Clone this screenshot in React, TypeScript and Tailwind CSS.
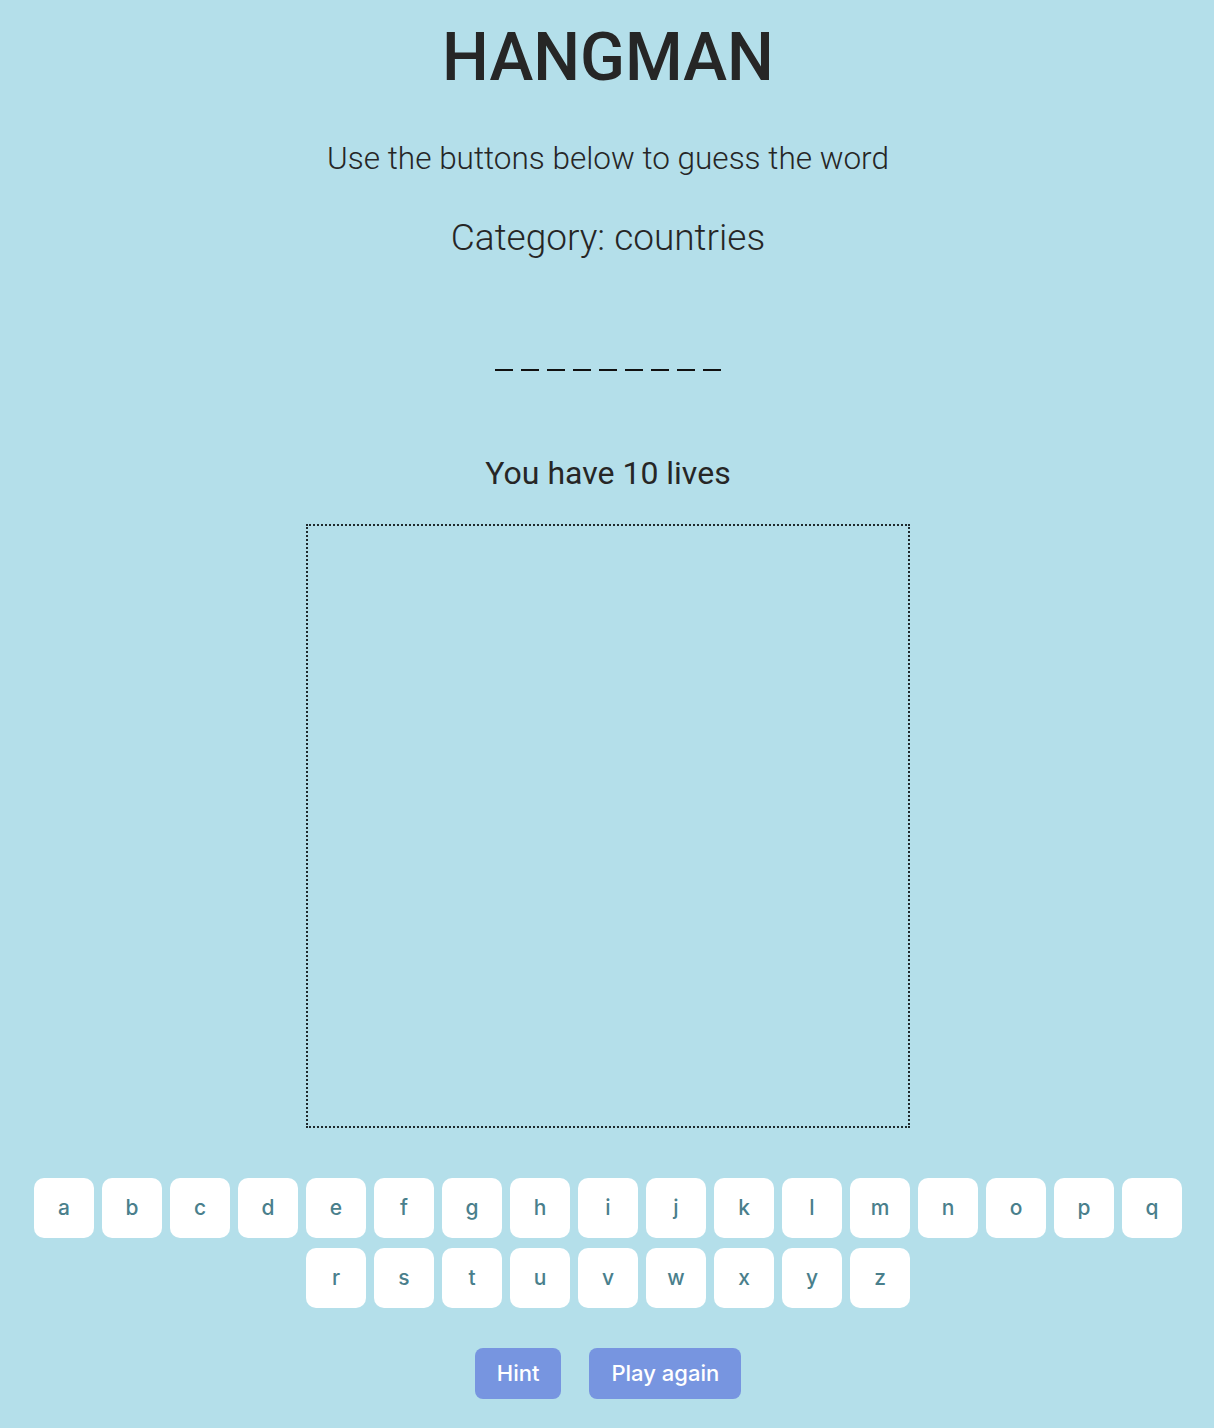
import React from 'react';

const LETTERS = 'abcdefghijklmnopqrstuvwxyz'.split('');
const WORD_LENGTH = 9;

const App: React.FC = () => {
  return (
    <div className="min-h-[1428px] pl-[2px] bg-[#b4dfea] flex flex-col items-center text-[#262626] font-['Roboto',sans-serif]">
      <h1 className="mt-[25px] text-[66px] leading-none font-medium">HANGMAN</h1>
      <p className="mt-[52px] text-[31.5px] leading-none font-light">Use the buttons below to guess the word</p>
      <h2 className="mt-[44px] text-[37px] leading-none font-light">Category: countries</h2>

      {/* hidden word */}
      <div className="mt-[113px] flex gap-[8px]">
        {Array.from({ length: WORD_LENGTH }).map((_, i) => (
          <span key={i} className="block w-[18px] h-[2px] bg-[#111]" />
        ))}
      </div>

      <p className="mt-[86px] text-[32px] leading-none font-normal">You have 10 lives</p>

      {/* canvas */}
      <div className="mt-[35px] w-[604px] h-[604px] border-2 border-dotted border-[#1f2a2e]" />

      {/* letters */}
      <div className="mt-[50px] w-[1160px] flex flex-wrap justify-center gap-x-[8px] gap-y-[10px] font-['Inter',sans-serif]">
        {LETTERS.map((l) => (
          <button
            key={l}
            className="w-[60px] h-[60px] rounded-[10px] bg-white text-[21px] font-medium text-[#4a7f8c] flex items-center justify-center"
          >
            {l}
          </button>
        ))}
      </div>

      <div className="mt-[40px] flex gap-[28px] font-['Inter',sans-serif]">
        <button className="h-[51px] px-[22px] rounded-[8px] bg-[#7795e0] text-white text-[22px] font-medium">Hint</button>
        <button className="h-[51px] px-[22px] rounded-[8px] bg-[#7795e0] text-white text-[22px] font-medium">Play again</button>
      </div>
    </div>
  );
};

export default App;
